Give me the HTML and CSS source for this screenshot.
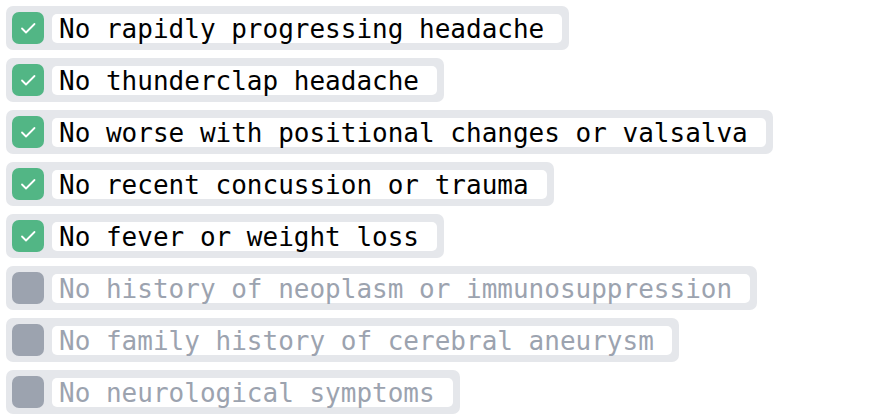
FILE: index.html
```html
<!DOCTYPE html>
<html>
<head>
<meta charset="utf-8">
<link rel="stylesheet" href="styles.css">
</head>
<body>
<ul class="list">
  <li class="item checked"><span class="box"><svg viewBox="0 0 32 32" width="32" height="32"><path d="M10 16.5 L14 20.5 L22.5 12" fill="none" stroke="#fff" stroke-width="1.8" stroke-linecap="round" stroke-linejoin="round"/></svg></span><span class="label">No rapidly progressing headache</span></li>
  <li class="item checked"><span class="box"><svg viewBox="0 0 32 32" width="32" height="32"><path d="M10 16.5 L14 20.5 L22.5 12" fill="none" stroke="#fff" stroke-width="1.8" stroke-linecap="round" stroke-linejoin="round"/></svg></span><span class="label">No thunderclap headache</span></li>
  <li class="item checked"><span class="box"><svg viewBox="0 0 32 32" width="32" height="32"><path d="M10 16.5 L14 20.5 L22.5 12" fill="none" stroke="#fff" stroke-width="1.8" stroke-linecap="round" stroke-linejoin="round"/></svg></span><span class="label">No worse with positional changes or valsalva</span></li>
  <li class="item checked"><span class="box"><svg viewBox="0 0 32 32" width="32" height="32"><path d="M10 16.5 L14 20.5 L22.5 12" fill="none" stroke="#fff" stroke-width="1.8" stroke-linecap="round" stroke-linejoin="round"/></svg></span><span class="label">No recent concussion or trauma</span></li>
  <li class="item checked"><span class="box"><svg viewBox="0 0 32 32" width="32" height="32"><path d="M10 16.5 L14 20.5 L22.5 12" fill="none" stroke="#fff" stroke-width="1.8" stroke-linecap="round" stroke-linejoin="round"/></svg></span><span class="label">No fever or weight loss</span></li>
  <li class="item"><span class="box"></span><span class="label">No history of neoplasm or immunosuppression</span></li>
  <li class="item"><span class="box"></span><span class="label">No family history of cerebral aneurysm</span></li>
  <li class="item"><span class="box"></span><span class="label">No neurological symptoms</span></li>
</ul>
</body>
</html>
```
FILE: styles.css
```css
html, body {
  margin: 0;
  padding: 0;
  background: #ffffff;
}
body {
  padding: 6px;
  font-family: "DejaVu Sans Mono", monospace;
}
.list {
  list-style: none;
  margin: 0;
  padding: 0;
  display: flex;
  flex-direction: column;
  align-items: flex-start;
  gap: 8px;
}
.item {
  display: flex;
  align-items: center;
  gap: 8px;
  background: #e5e7eb;
  border-radius: 7px;
  padding: 6px 7px 6px 6px;
  height: 32px;
}
.box {
  width: 32px;
  height: 32px;
  border-radius: 7px;
  background: #9ca3af;
  display: block;
  flex: none;
}
.box svg {
  display: block;
}
.checked .box {
  background: #52b685;
}
.label {
  display: flex;
  align-items: center;
  box-sizing: border-box;
  height: 29px;
  background: #ffffff;
  border-radius: 5px;
  padding: 2px 18px 0 7px;
  font-size: 26px;
  color: #9ca3af;
  white-space: pre;
}
.checked .label {
  color: #000000;
}
```
